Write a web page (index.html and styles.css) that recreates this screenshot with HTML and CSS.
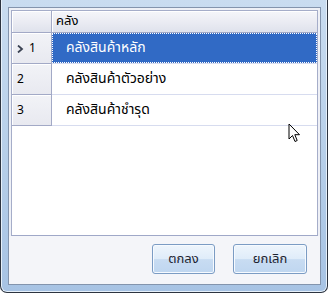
FILE: index.html
```html
<!DOCTYPE html>
<html lang="th">

<head>
  <meta charset="UTF-8">
  <meta
    name="viewport"
    content="width=device-width, initial-scale=1.0"
  >

  <title>คลัง</title>

  <link rel="stylesheet" href="styles.css">
</head>

<body>
  <div class="window">
    <div class="client">
      <div class="grid">
        <div class="grid__row grid__row--head">
          <div class="grid__corner"></div>
          <div class="grid__title">คลัง</div>
        </div>

        <div class="grid__row grid__row--selected">
          <div class="grid__num">
            <svg class="grid__arrow" width="7" height="8" viewBox="0 0 7 8">
              <path d="M1 0.5 L5 4 L1 7.5" fill="none" stroke="#3a4252" stroke-width="1.8" />
            </svg>1
          </div>
          <div class="grid__cell">
            <span class="grid__focus">คลังสินค้าหลัก</span>
          </div>
        </div>

        <div class="grid__row">
          <div class="grid__num">2</div>
          <div class="grid__cell">คลังสินค้าตัวอย่าง</div>
        </div>

        <div class="grid__row">
          <div class="grid__num">3</div>
          <div class="grid__cell">คลังสินค้าชำรุด</div>
        </div>
      </div>

      <div class="footer">
        <button class="btn">ตกลง</button>
        <button class="btn btn--wide">ยกเลิก</button>
      </div>
    </div>

    <!-- mouse pointer -->
    <svg class="pointer" width="14" height="21" viewBox="0 0 14 21">
      <path
        d="M1 1 L1 16 L4.5 12.5 L7 18.5 L9.2 17.5 L6.8 11.7 L11.5 11.7 Z"
        fill="#fff"
        stroke="#000"
        stroke-width="1"
        stroke-linejoin="round"
      />
    </svg>
  </div>
</body>

</html>
```

FILE: styles.css
```css
html,
body {
  margin: 0;
  padding: 0;
}

body {
  width: 328px;
  height: 293px;
  overflow: hidden;
  font-family: Tahoma, 'Noto Sans Thai', 'DejaVu Sans', sans-serif;
}

.window {
  position: relative;
  box-sizing: border-box;
  width: 328px;
  height: 293px;
  padding: 7px 6px 7px 7px;

  border: 1px solid #2d3440;
  border-top: none;
  border-radius: 0 0 7px 7px;
  background: linear-gradient(180deg, #c9dcf0 0%, #b4cde8 60%, #a7c3e4 100%);
  box-shadow: inset 1px 0 0 #e6f0fa, inset -1px 0 0 #e6f0fa, inset 0 -1px 0 #e6f0fa;
}

.client {
  box-sizing: border-box;
  height: 100%;
  padding: 2px 2px 0 2px;

  display: flex;
  flex-direction: column;

  border: 1px solid #8394ad;
  background-color: #eef0f6;
}

.grid {
  flex: 1;
  border: 1px solid #a5adc9;
  border-bottom: 1px solid #9fa8c8;
  background-color: #fff;
}

.grid__row {
  display: flex;
  height: 31px;
  border-bottom: 1px solid #d7dcef;
  box-sizing: border-box;
  font-size: 14px;
  color: #000;
}

.grid__row--head {
  height: 22px;
  border-bottom: 1px solid #a2a9c6;
  background: linear-gradient(180deg, #f5f6fa 0%, #ebecf3 50%, #dfe2ec 100%);
  font-size: 13px;
}

.grid__corner {
  width: 39px;
  border-right: 1px solid #a2a9c6;
  box-shadow: inset 1px 1px 0 #fff;
}

.grid__title {
  flex: 1;
  padding-left: 4px;
  line-height: 21px;
  box-shadow: inset 1px 1px 0 #fff;
}

.grid__num {
  box-sizing: border-box;
  width: 40px;
  padding-left: 5px;
  line-height: 30px;

  border-right: 1px solid #a2a9c6;
  border-bottom: 1px solid #a2a9c6;
  margin-bottom: -1px;
  background: linear-gradient(180deg, #f2f3f7 0%, #e8e9f0 100%);
  box-shadow: inset 1px 1px 0 #fff;
  font-size: 12px;
}

.grid__arrow {
  margin: 0 5px 0 0;
  vertical-align: -0.5px;
}

.grid__cell {
  flex: 1;
  padding-left: 14px;
  line-height: 30px;
}

.grid__row--selected .grid__cell {
  padding: 0;
  background-color: #316ac5;
  color: #fff;
}

.grid__focus {
  display: block;
  box-sizing: border-box;
  height: 30px;
  padding-left: 13px;
  line-height: 28px;
  border: 1px dotted #fff;
}

.footer {
  height: 48px;
  margin: 0 -2px;
  padding: 8px 13px 0 0;
  box-sizing: border-box;

  display: flex;
  justify-content: flex-end;
  align-items: flex-start;
  gap: 18px;

  background-color: #f4f5f9;
}

.btn {
  width: 63px;
  height: 30px;
  padding: 0;

  border: 1px solid #7b9cc4;
  border-radius: 3px;
  background: linear-gradient(180deg, #eef5fc 0%, #dfecf9 50%, #c8dcf2 52%, #bfd6f0 100%);
  box-shadow: inset 0 0 0 1px #f6faff;

  font-family: Tahoma, 'Noto Sans Thai', 'DejaVu Sans', sans-serif;
  font-size: 13px;
  color: #1c2430;
}

.btn--wide {
  width: 74px;
}

.pointer {
  position: absolute;
  left: 287px;
  top: 123px;
}
```
